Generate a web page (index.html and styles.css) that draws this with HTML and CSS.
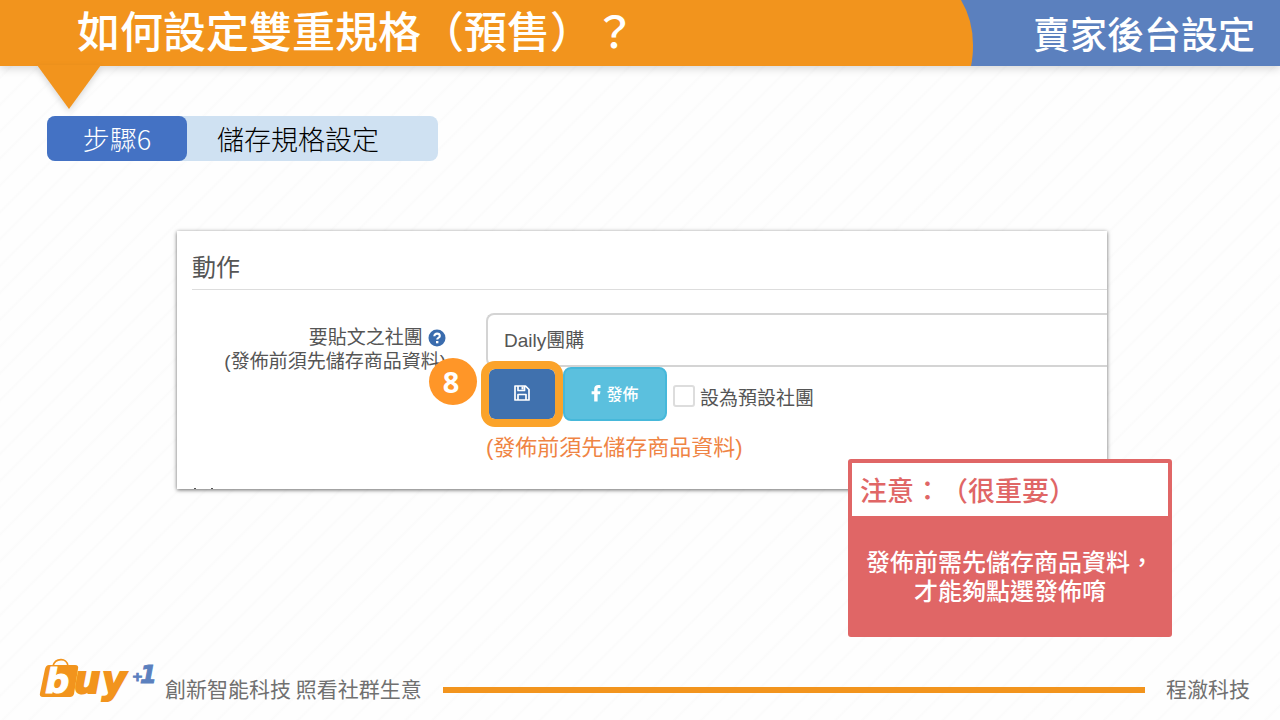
FILE: index.html
```html
<!DOCTYPE html>
<html lang="zh-Hant">
<head>
  <meta charset="UTF-8">
  <meta name="viewport" content="width=device-width, initial-scale=1.0">
  <title>如何設定雙重規格（預售）？</title>
  <link rel="stylesheet" href="styles.css">
</head>

<body>

  <header class="topbar">
    <h1 class="topbar-title">如何設定雙重規格（預售）？</h1>
    <svg class="topbar-edge" viewBox="0 0 14 66" preserveAspectRatio="none" aria-hidden="true">
      <path d="M0 0H1Q13 20 13 45Q13 57 11 66H0Z" fill="#f2941d"/>
    </svg>
    <p class="topbar-section">賣家後台設定</p>
    <svg class="topbar-arrow" viewBox="0 0 64 44" aria-hidden="true">
      <path d="M0 0H64L32 44Z" fill="#f2941d"/>
    </svg>
  </header>

  <main class="content">

    <div class="step">
      <span class="step-number">步驟6</span>
      <span class="step-name">儲存規格設定</span>
    </div>

    <section class="panel">
      <h2 class="panel-title">動作</h2>

      <form class="panel-form">
        <div class="form-label">
          <label for="group">要貼文之社團</label>
          <svg class="help-icon" viewBox="0 0 18 18" aria-hidden="true">
            <circle cx="9" cy="9" r="8.5" fill="#3a6cae"/>
            <path d="M6.3 7.2C6.3 3.6 11.8 3.9 11.8 6.9C11.8 8.7 9.2 8.8 9.2 10.6" fill="none" stroke="#fff" stroke-width="2.1"/>
            <rect x="8" y="12" width="2.4" height="2.3" fill="#fff"/>
          </svg>
          <div>(發佈前須先儲存商品資料)</div>
        </div>

        <div class="form-controls">
          <select id="group" class="group-select">
            <option>Daily團購</option>
          </select>

          <div class="actions">
            <button type="button" class="btn btn-save" aria-label="儲存">
              <svg class="save-icon" viewBox="0 0 16 16" aria-hidden="true">
                <path d="M1 1H11.5L15 4.5V15H1Z M4 1V5.5H10.5V1 M4 15V9.5H12V15" fill="none" stroke="#fff" stroke-width="1.7" stroke-linejoin="round"/>
                <rect x="7.5" y="1.5" width="2" height="3" fill="#fff"/>
              </svg>
            </button>
            <button type="button" class="btn btn-publish">
              <svg class="facebook-icon" viewBox="0 0 10 17" aria-hidden="true">
                <path d="M9.5 0.2V3.1H7.8C6.8 3.1 6.6 3.6 6.6 4.4V6.2H9.4L9 9.2H6.6V16.5H3.2V9.2H0.6V6.2H3.2V3.8C3.2 1.3 4.8 0 7.1 0C8.2 0 9.1 0.1 9.5 0.2Z" fill="#fff"/>
              </svg>
              發佈
            </button>
            <label class="default-group">
              <input type="checkbox" class="checkbox">
              設為預設社團
            </label>
          </div>

          <p class="hint">(發佈前須先儲存商品資料)</p>
        </div>
      </form>

      <span class="badge">8</span>
    </section>

    <aside class="notice">
      <h3 class="notice-title">注意：（很重要）</h3>
      <p class="notice-text">發佈前需先儲存商品資料，<br>才能夠點選發佈唷</p>
    </aside>

  </main>

  <footer class="footer">
    <svg class="logo" viewBox="0 0 118 64" role="img" aria-label="buy+1">
      <path d="M15 10C17 2 29 1 30 10" fill="none" stroke="#f2941d" stroke-width="1.6"/>
      <path d="M11 9H37Q41 9 40 13L36 38Q35 41 32 41H5Q1 41 2 37L7 13Q8 9 11 9Z" fill="#f2941d"/>
      <text class="logo-b" x="7" y="37">b</text>
      <text class="logo-uy" x="36 64" y="37">uy</text>
      <text class="logo-plus" x="94" y="25">+</text>
      <text class="logo-one" x="102" y="27">1</text>
    </svg>
    <span class="slogan">創新智能科技 照看社群生意</span>
    <span class="footer-line"></span>
    <span class="company">程澈科技</span>
  </footer>

</body>
</html>
```
FILE: styles.css
```css
/* --- Basic Setup & Variables --- */
:root {
  --orange: #f2941d;
  --blue: #5b80be;
  --red: #e06666;
  --text-grey: #707070;
  --form-font-size: 19px;
}

* {
  box-sizing: border-box;
}

body {
  margin: 0;
  min-height: 100vh;
  display: flex;
  flex-direction: column;
  background: repeating-linear-gradient(135deg, #fefefe 0 15px, #fbfbfb 17px, #fefefe 19px);
  font-family: "Liberation Sans", "Noto Sans CJK TC", sans-serif;
  color: #555555;
}

h1,
h2,
h3,
p {
  margin: 0;
}

/* --- Top Bar --- */
.topbar {
  position: relative;
  display: flex;
  align-items: center;
  height: 66px;
  background-color: var(--blue);
  box-shadow: 0 3px 8px rgba(0, 0, 0, 0.15);
  color: #ffffff;
  font-family: "Noto Sans CJK TC", sans-serif;
}

.topbar-title {
  flex: 0 0 75%;
  padding: 0 0 8px 77px;
  background-color: var(--orange);
  font-size: 43px;
  font-weight: 500;
  line-height: 58px;
}

.topbar-edge {
  flex: none;
  width: 14px;
  height: 66px;
}

.topbar-section {
  flex: 1;
  padding-right: 25px;
  font-size: 37px;
  font-weight: 500;
  line-height: 66px;
  text-align: right;
}

.topbar-arrow {
  position: absolute;
  top: 65px;
  left: 37px;
  width: 64px;
  height: 44px;
  overflow: visible;
  filter: drop-shadow(0 3px 3px rgba(0, 0, 0, 0.15));
}

/* --- Main Content --- */
.content {
  position: relative;
  flex: 1;
  padding-top: 50px;
}

.step {
  display: inline-flex;
  margin-left: 47px;
  border-radius: 8px;
  background-color: #cfe1f2;
  font-family: "Noto Sans CJK TC", sans-serif;
  font-size: 27px;
  font-weight: 300;
  line-height: 45px;
  vertical-align: top;
}

.step-number {
  width: 140px;
  border-radius: 8px;
  background-color: #4472c4;
  color: #ffffff;
  text-align: center;
}

.step-name {
  padding: 0 59px 0 30px;
  color: #000000;
}

/* --- Form Panel --- */
.panel {
  position: relative;
  margin: 70px 173px 0 177px;
  padding: 19px 0 24px 15px;
  background-color: #ffffff;
  box-shadow: 0 1px 4px rgba(0, 0, 0, 0.6);
}

/* top edge of the next heading, cut off by the panel */
.panel::after {
  content: "";
  position: absolute;
  bottom: 0;
  left: 17px;
  width: 15px;
  height: 1px;
  border: solid #555555;
  border-width: 0 2px;
}

.panel-title {
  padding-bottom: 3px;
  border-bottom: 1px solid #dddddd;
  font-size: 24px;
  font-weight: 400;
  line-height: 36px;
}

.panel-form {
  display: flex;
  gap: 40px;
  margin-top: 23px;
  font-size: var(--form-font-size);
}

.form-label {
  width: 254px;
  padding-top: 13px;
  line-height: 24px;
  text-align: right;
  white-space: nowrap;
}

.help-icon {
  width: 18px;
  height: 18px;
  vertical-align: -3px;
}

.form-controls {
  flex: 1;
}

.group-select {
  display: block;
  width: 100%;
  height: 54px;
  padding: 0 16px;
  appearance: none;
  border: 2px solid #d4d4d4;
  border-right: 0;
  border-radius: 8px 0 0 8px;
  background-color: #ffffff;
  color: #555555;
  font: inherit;
}

.actions {
  display: flex;
  align-items: center;
  padding-left: 3px;
}

.btn {
  display: flex;
  justify-content: center;
  align-items: center;
  gap: 5px;
  padding: 0 0 2px;
  color: #ffffff;
  font: inherit;
  font-size: 16px;
  font-weight: 500;
}

.btn-save {
  position: relative;
  width: 66px;
  height: 50px;
  border: 0;
  border-radius: 6px;
  outline: 8px solid #fba32a;
  background-color: #4071ae;
}

.btn-publish {
  width: 104px;
  height: 54px;
  margin: 0 6px 0 8px;
  border: 2px solid #46b8da;
  border-radius: 8px;
  background-color: #5bc0de;
}

.save-icon {
  width: 16px;
  height: 16px;
}

.facebook-icon {
  width: 10px;
  height: 17px;
}

.default-group {
  display: flex;
  align-items: center;
  gap: 5px;
  padding-top: 4px;
}

.checkbox {
  width: 22px;
  height: 22px;
  margin: 0;
  appearance: none;
  border: 2px solid #dddddd;
  border-radius: 3px;
  background-color: #ffffff;
}

.hint {
  padding-top: 10px;
  color: #ef8444;
  font-size: 22px;
  line-height: 34px;
}

.badge {
  position: absolute;
  top: 127px;
  left: 252px;
  width: 48px;
  height: 47px;
  padding-right: 4px;
  border-radius: 50%;
  background-color: #ff9628;
  color: #ffffff;
  font-family: "Open Sans", sans-serif;
  font-size: 29px;
  font-weight: 700;
  line-height: 47px;
  text-align: center;
}

/* --- Notice --- */
.notice {
  position: absolute;
  top: 393px;
  right: 108px;
  width: 324px;
  border: 4px solid var(--red);
  border-radius: 3px;
  background-color: var(--red);
  font-family: "Noto Sans CJK TC", sans-serif;
}

.notice-title {
  padding-left: 8px;
  background-color: #ffffff;
  color: var(--red);
  font-size: 27px;
  font-weight: 500;
  line-height: 53px;
  text-spacing-trim: space-all;
}

.notice-text {
  padding: 30px 0 29px;
  color: #ffffff;
  font-size: 24px;
  font-weight: 500;
  line-height: 29px;
  text-align: center;
}

/* --- Footer --- */
.footer {
  display: flex;
  align-items: center;
  height: 64px;
  padding: 0 30px 0 38px;
  font-family: "Noto Sans CJK TC", sans-serif;
  font-size: 21px;
  line-height: 30px;
  color: var(--text-grey);
}

.logo {
  width: 118px;
  height: 64px;
  margin-right: 9px;
  font-family: "DejaVu Sans", sans-serif;
  font-style: italic;
  font-weight: 700;
}

.logo-b {
  fill: #ffffff;
  stroke: #ffffff;
  stroke-width: 1px;
  font-size: 34px;
}

.logo-uy {
  fill: var(--orange);
  stroke: var(--orange);
  stroke-width: 2px;
  font-size: 37px;
}

.logo-plus,
.logo-one {
  fill: var(--blue);
  stroke: var(--blue);
  stroke-width: 1px;
}

.logo-plus {
  font-size: 13px;
}

.logo-one {
  font-size: 24px;
}

.footer-line {
  flex: 1;
  height: 6px;
  margin: 4px 21px 0;
  background-color: var(--orange);
}
```
